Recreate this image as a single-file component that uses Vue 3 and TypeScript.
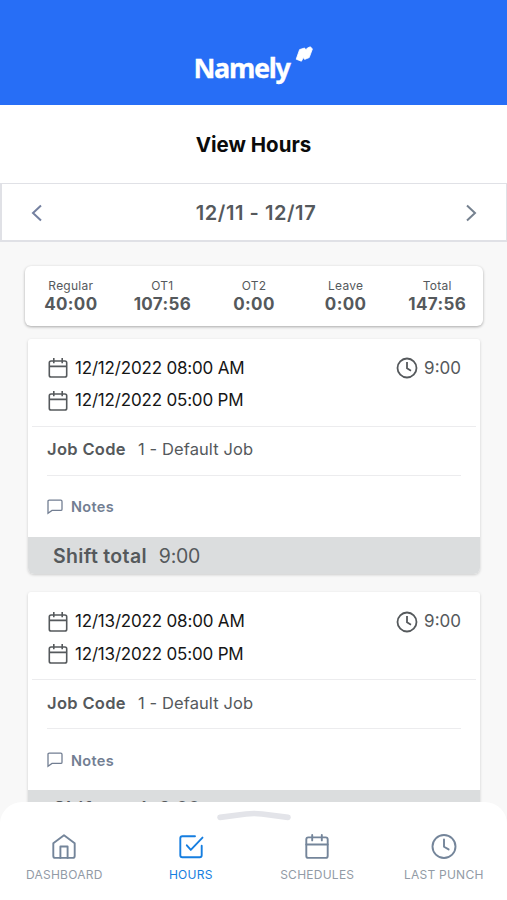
<script setup lang="ts">
interface Total {
  label: string
  value: string
}

interface Shift {
  start: string
  end: string
  hours: string
  job: string
}

interface Tab {
  id: 'home' | 'hours' | 'schedules' | 'punch'
  label: string
}

const totals: Total[] = [
  { label: 'Regular', value: '40:00' },
  { label: 'OT1', value: '107:56' },
  { label: 'OT2', value: '0:00' },
  { label: 'Leave', value: '0:00' },
  { label: 'Total', value: '147:56' },
]

const shifts: Shift[] = [
  { start: '12/12/2022 08:00 AM', end: '12/12/2022 05:00 PM', hours: '9:00', job: '1 - Default Job' },
  { start: '12/13/2022 08:00 AM', end: '12/13/2022 05:00 PM', hours: '9:00', job: '1 - Default Job' },
]

const tabs: Tab[] = [
  { id: 'home', label: 'DASHBOARD' },
  { id: 'hours', label: 'HOURS' },
  { id: 'schedules', label: 'SCHEDULES' },
  { id: 'punch', label: 'LAST PUNCH' },
]
</script>

<template>
  <div class="screen">
    <header class="brand">
      <span class="wordmark">Namely</span>
      <svg class="flag" viewBox="0 0 18 18" aria-hidden="true">
        <path d="M4.6 3.6 9.6 2l1.2 2L12.4 2l3-1.2L17.4 3l-3.2 8.6-4.6 1.8-1.2-1.8L6.4 15.2 1.2 13.2Z" />
      </svg>
    </header>
    <h1 class="title">View Hours</h1>

    <div class="period">
      <button class="arrow" aria-label="Previous period">
        <svg viewBox="0 0 12 18"><path d="M10 1.5 2 9l8 7.5" /></svg>
      </button>
      <span class="range">12/11 - 12/17</span>
      <button class="arrow next" aria-label="Next period">
        <svg viewBox="0 0 12 18"><path d="m2 1.5 8 7.5-8 7.5" /></svg>
      </button>
    </div>

    <main class="content">
      <section class="totals">
        <div v-for="t in totals" :key="t.label" class="total">
          <span class="total-label">{{ t.label }}</span>
          <span class="total-value">{{ t.value }}</span>
        </div>
      </section>

      <article v-for="s in shifts" :key="s.start" class="shift">
        <div class="punches">
          <div class="times">
            <div v-for="p in [s.start, s.end]" :key="p" class="punch-time">
              <svg class="cal" viewBox="0 0 20 20">
                <rect x="1.3" y="3" width="17.4" height="16" rx="1.8" />
                <path d="M1.3 8.4h17.4M5.8 0v5.2M14.2 0v5.2" />
              </svg>
              <span>{{ p }}</span>
            </div>
          </div>
          <div class="duration">
            <svg class="clock" viewBox="0 0 22 22">
              <circle cx="11" cy="11" r="9.5" />
              <path d="M11 5v6.3l4 2.4" />
            </svg>
            <span>{{ s.hours }}</span>
          </div>
        </div>
        <div class="job">
          <b>Job Code</b>
          <span>{{ s.job }}</span>
        </div>
        <div class="notes">
          <svg viewBox="0 0 16 16">
            <path d="M2.2 1.2h11.6q1.2 0 1.2 1.2v7.8q0 1.2-1.2 1.2H5L1 14.2V2.4q0-1.2 1.2-1.2Z" />
          </svg>
          <span>Notes</span>
        </div>
        <div class="shift-total">
          <b>Shift total</b>
          <span>{{ s.hours }}</span>
        </div>
      </article>
    </main>

    <nav class="tabs">
      <svg class="handle" viewBox="0 0 76 12"><path d="M4 8.4 30 5q8-1 16 0L72 8.4" /></svg>
      <a v-for="t in tabs" :key="t.id" class="tab" :class="{ active: t.id === 'hours' }">
        <svg v-if="t.id === 'home'" viewBox="0 0 26 26">
          <path d="M2.3 9.2 13 1.3l10.7 7.9v12.7q0 2-2 2H4.3q-2 0-2-2Z" />
          <path d="M9.4 23.9V12.5h7.2v11.4" />
        </svg>
        <svg v-else-if="t.id === 'hours'" viewBox="0 0 26 26">
          <path d="M17 2.2H4.3q-2 0-2 2v17q0 2 2 2h17.4q2 0 2-2v-9.4" />
          <path d="m8.8 11.3 4 4.6L24.5 3.6" />
        </svg>
        <svg v-else-if="t.id === 'schedules'" viewBox="0 0 26 26">
          <rect x="2.3" y="3.4" width="21.4" height="20.5" rx="2" />
          <path d="M2.3 10.5h21.4M8.2 1v5.4M17.8 1v5.4" />
        </svg>
        <svg v-else viewBox="0 0 26 26">
          <circle cx="13" cy="12.5" r="11.5" />
          <path d="M13 5.5v7.2l4.6 2.7" />
        </svg>
        <span>{{ t.label }}</span>
      </a>
    </nav>
  </div>
</template>

<style>
body {
  background: #f8f8f8;
}
</style>

<style scoped>
.screen {
  height: 900px;
  overflow: hidden;
  display: flex;
  flex-direction: column;
  background: #f8f8f8;
  color: #55595c;
  font-family: Inter, 'Liberation Sans', sans-serif;
  position: relative;
}

.screen * {
  box-sizing: border-box;
}

svg {
  display: block;
  flex: none;
  fill: none;
  stroke: currentColor;
}

.brand {
  height: 104.5px;
  flex: none;
  display: flex;
  justify-content: center;
  align-items: flex-start;
  gap: 5px;
  padding: 46px 1px 0 0;
  background: #276ef6;
  color: #fff;
}

.wordmark {
  margin-top: 3.5px;
  font: 700 27px/36px 'Noto Sans', sans-serif;
  letter-spacing: -1.3px;
  -webkit-text-stroke: 0.3px #fff;
}

.flag {
  width: 18px;
  height: 18px;
  fill: #fff;
  stroke: #fff;
  stroke-width: 0.8;
  stroke-linejoin: round;
}

.title {
  margin: 0;
  height: 78px;
  flex: none;
  background: #fff;
  color: #0b0b0b;
  font-size: 20.5px;
  font-weight: 700;
  line-height: 79px;
  text-align: center;
}

.period {
  height: 59px;
  flex: none;
  display: flex;
  align-items: center;
  justify-content: space-between;
  padding: 2px 29px 0 29px;
  background: #fff;
  border: 1px solid #e0e1e6;
  border-left-width: 2px;
  border-bottom-width: 2px;
}

.arrow {
  padding: 0;
  border: 0;
  background: none;
  color: #7480a0;
}

.arrow.next {
  color: #75818f;
}

.arrow svg {
  width: 12px;
  height: 18px;
  stroke-width: 2;
}

.range {
  padding: 1px 0 0 4px;
  font-size: 20px;
  font-weight: 600;
  letter-spacing: 0.55px;
}

.content {
  flex: none;
  padding: 24px 25px 0;
}

.totals {
  height: 60px;
  display: grid;
  grid-template-columns: repeat(5, 1fr);
  width: 458px;
  padding: 12px 0 0;
  background: #fff;
  border-radius: 6px;
  box-shadow: 0 1px 3px rgba(0, 0, 0, 0.32);
}

.total {
  display: flex;
  flex-direction: column;
  align-items: center;
}

.total-label {
  font-size: 12px;
  line-height: 16px;
  letter-spacing: 0.25px;
}

.total-value {
  font-size: 17px;
  font-weight: 650;
  line-height: 20px;
  letter-spacing: 0.35px;
}

.shift {
  width: 452px;
  height: 235px;
  margin: 13px 0 0 3px;
  overflow: hidden;
  background: #fff;
  border-radius: 3px 3px 6px 6px;
  box-shadow: 0 1px 3px rgba(0, 0, 0, 0.18);
}

.shift + .shift {
  margin-top: 18.5px;
}

.punches {
  height: 88px;
  margin: 0 4px;
  padding: 13px 15px 0;
  display: flex;
  justify-content: space-between;
  border-bottom: 1px solid #ececee;
}

.punch-time {
  height: 32.5px;
  display: flex;
  align-items: center;
  gap: 7px;
  padding-left: 1px;
  color: #161616;
  font-size: 17px;
  letter-spacing: -0.18px;
}

.cal {
  width: 20px;
  height: 20px;
  margin-top: 1px;
  color: #55595c;
  stroke-width: 1.6;
}

.duration {
  height: 32px;
  display: flex;
  align-items: center;
  gap: 6px;
  font-size: 17px;
}

.clock {
  width: 22px;
  height: 22px;
  margin-top: 1px;
  stroke-width: 1.8;
}

.job {
  height: 49px;
  margin: 0 19px;
  display: flex;
  align-items: center;
  gap: 12px;
  padding-bottom: 3px;
  border-bottom: 1px solid #ececee;
  font-size: 16.5px;
}

.job b,
.shift-total b {
  font-weight: 600;
  letter-spacing: 0.33px;
}

.job span {
  letter-spacing: 0.1px;
}

.notes {
  height: 61px;
  padding: 1px 19px 0;
  display: flex;
  align-items: center;
  gap: 8px;
  color: #727e92;
  font-size: 14.5px;
  font-weight: 600;
  letter-spacing: 0.35px;
}

.notes svg {
  width: 16px;
  height: 16px;
  stroke-width: 1.3;
}

.shift-total {
  height: 37px;
  display: flex;
  align-items: center;
  gap: 12px;
  padding: 1px 25px 0;
  background: #dbddde;
  font-size: 19.5px;
}

.shift-total span {
  letter-spacing: -0.3px;
}

.tabs {
  position: absolute;
  left: 0;
  bottom: 0;
  width: 507px;
  height: 98px;
  display: grid;
  grid-template-columns: repeat(4, 126.5px);
  padding-left: 1px;
  background: #fff;
  border-radius: 22px 22px 0 0;
  color: #74859a;
}

.handle {
  position: absolute;
  left: 216px;
  top: 7px;
  width: 76px;
  height: 12px;
  color: #e3e4e9;
  stroke-width: 5.6;
  stroke-linecap: round;
}

.tab {
  display: flex;
  flex-direction: column;
  align-items: center;
  padding-top: 32px;
  gap: 6px;
  font-size: 12px;
  line-height: 17px;
  letter-spacing: 0.25px;
}

.tab svg {
  width: 26px;
  height: 26px;
  stroke-width: 1.9;
  stroke-linecap: round;
  stroke-linejoin: round;
}

.tab span {
  color: #929ba6;
}

.tab.active,
.tab.active span {
  color: #167ee0;
}
</style>
